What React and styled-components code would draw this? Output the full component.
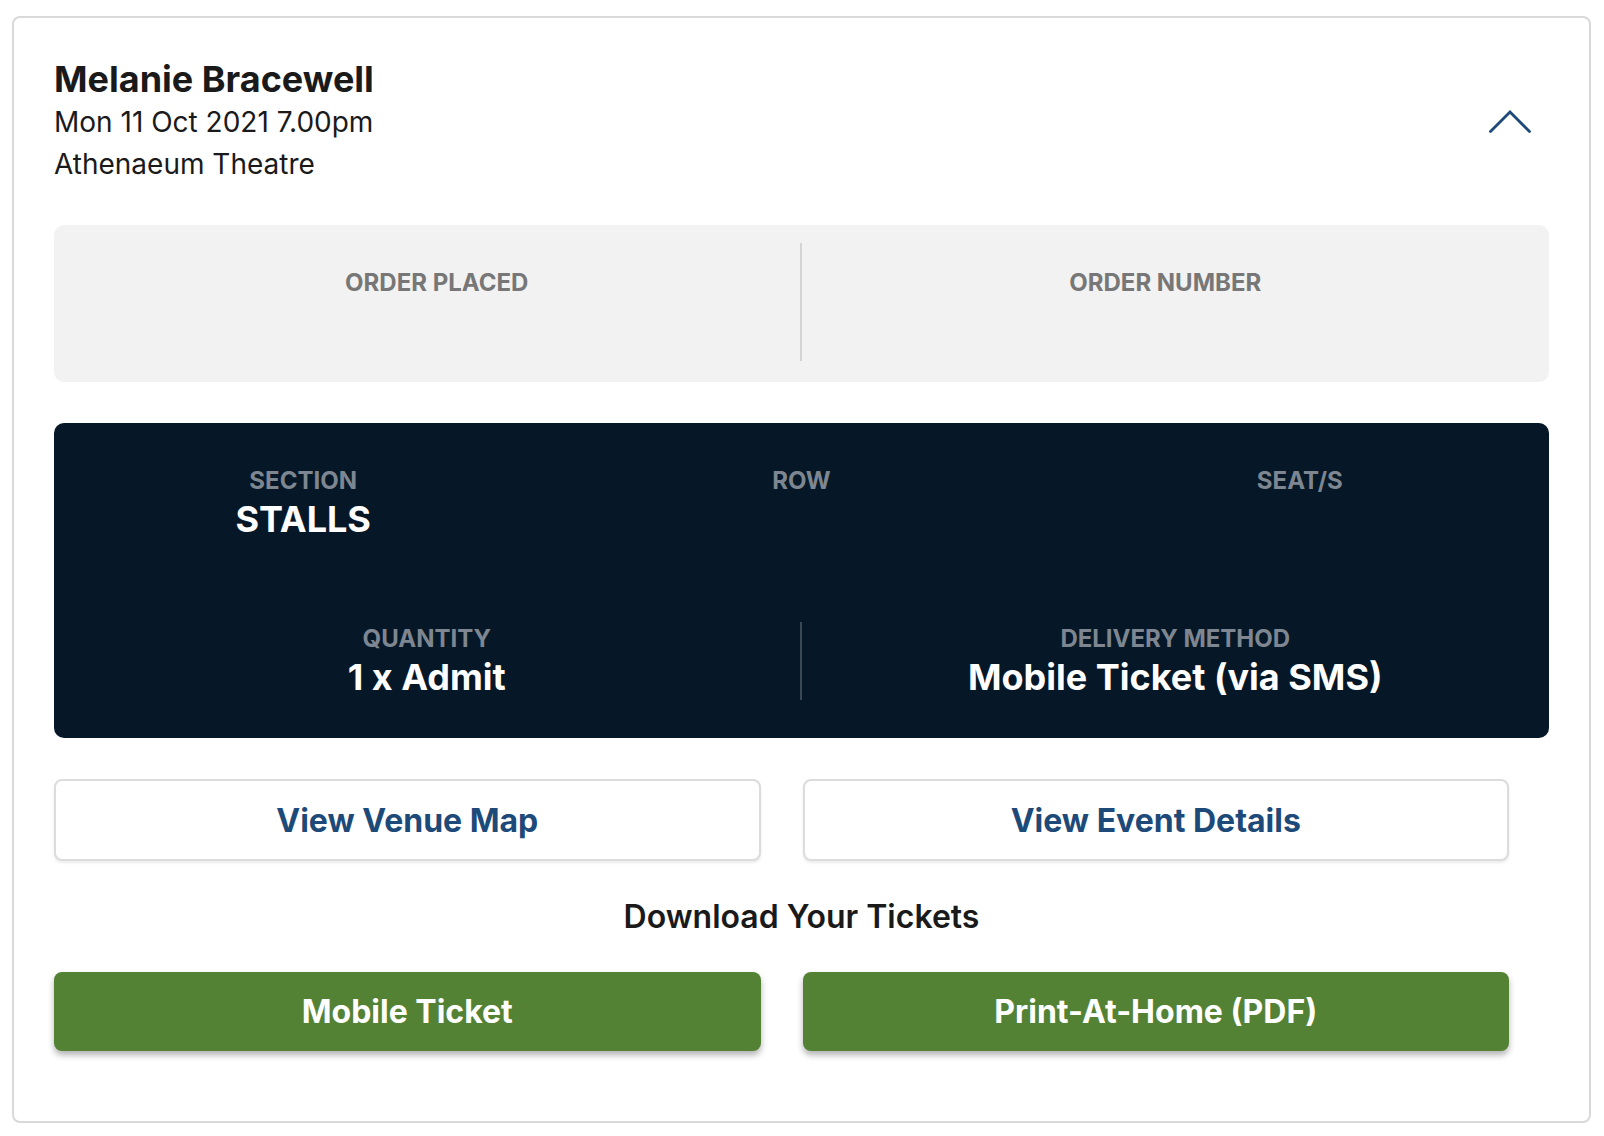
import React from "react";
import styled, { createGlobalStyle } from "styled-components";

const GlobalStyle = createGlobalStyle`
  html, body {
    margin: 0;
    padding: 0;
    background: #ffffff;
    font-family: Inter, "Noto Sans", "Liberation Sans", sans-serif;
    color: #1a1a1a;
  }
  * { box-sizing: border-box; }
`;

const Page = styled.div`
  padding: 16px 13px 13px 12px;
`;

const Card = styled.section`
  border: 2px solid #d9d9d9;
  border-radius: 8px;
  padding: 40px 40px 70px 40px;
  background: #fff;
`;

const Header = styled.header`
  display: flex;
  align-items: center;
  justify-content: space-between;
  margin-bottom: 40px;
`;

const HeaderText = styled.div`
  display: flex;
  flex-direction: column;
`;

const Title = styled.h2`
  margin: 0;
  font-size: 36px;
  line-height: 42px;
  font-weight: 700;
  color: #1a1a1a;
`;

const Meta = styled.p`
  margin: 0;
  font-size: 28px;
  line-height: 42px;
  font-weight: 400;
  color: #1a1a1a;
  &:first-of-type {
    margin-top: 1px;
  }
`;

const ToggleButton = styled.button`
  border: none;
  background: none;
  padding: 0;
  margin-right: 18px;
  display: flex;
  cursor: pointer;
`;

const OrderBox = styled.div`
  display: grid;
  grid-template-columns: 1fr 1fr;
  background: #f2f2f2;
  border-radius: 10px;
  padding: 18px 20px 21px;
  margin-bottom: 41px;
`;

const OrderCol = styled.div`
  display: flex;
  flex-direction: column;
  align-items: center;
  padding: 23px 0 20px;
  border-right: ${(p) => (p.$divider ? "2px solid #d4d4d4" : "none")};
`;

const Label = styled.div`
  font-size: 24px;
  line-height: 33px;
  font-weight: 700;
  text-transform: uppercase;
  color: ${(p) => (p.$dark ? "#7e8791" : "#777777")};
`;

const EmptyValue = styled.div`
  min-height: 42px;
`;

const SeatBox = styled.div`
  background: #061827;
  border-radius: 10px;
  padding: 41px 0 38px;
  margin-bottom: 41px;
  display: flex;
  flex-direction: column;
  gap: 80px;
`;

const SeatRow = styled.div`
  display: grid;
  grid-template-columns: repeat(${(p) => p.$cols}, 1fr);
`;

const SeatCol = styled.div`
  display: flex;
  flex-direction: column;
  align-items: center;
  border-right: ${(p) => (p.$divider ? "2px solid #3b4754" : "none")};
`;

const Value = styled.div`
  font-size: 36px;
  line-height: 45px;
  font-weight: 700;
  color: #ffffff;
  min-height: 45px;
`;

const LinkRow = styled.div`
  display: grid;
  grid-template-columns: 1fr 1fr;
  gap: 42px;
  margin-right: 40px;
`;

const OutlineButton = styled.button`
  height: 82px;
  border: 2px solid #dcdcdc;
  border-radius: 8px;
  background: #ffffff;
  box-shadow: 0 2px 3px rgba(0, 0, 0, 0.08);
  font-family: inherit;
  font-size: 32px;
  font-weight: 700;
  color: #1d4a78;
  cursor: pointer;
`;

const DownloadTitle = styled.h3`
  margin: 33px 0 33px;
  text-align: center;
  font-size: 32px;
  line-height: 45px;
  font-weight: 600;
  color: #1a1a1a;
`;

const GreenButton = styled.button`
  height: 79px;
  border: none;
  border-radius: 8px;
  background: #548235;
  box-shadow: 0 4px 6px rgba(0, 0, 0, 0.3);
  font-family: inherit;
  font-size: 32px;
  font-weight: 700;
  color: #ffffff;
  cursor: pointer;
`;

const ChevronUp = () => (
  <svg width="42" height="24" viewBox="0 0 42 24" fill="none">
    <polyline
      points="1.5,21.5 21,2 40.5,21.5"
      stroke="#1d4a78"
      strokeWidth="2.8"
      strokeLinecap="round"
      strokeLinejoin="miter"
    />
  </svg>
);

export default function App() {
  return (
    <>
      <GlobalStyle />
      <Page>
        <Card>
          <Header>
            <HeaderText>
              <Title>Melanie Bracewell</Title>
              <Meta>Mon 11 Oct 2021 7.00pm</Meta>
              <Meta>Athenaeum Theatre</Meta>
            </HeaderText>
            <ToggleButton aria-label="Collapse">
              <ChevronUp />
            </ToggleButton>
          </Header>

          <OrderBox>
            <OrderCol $divider>
              <Label>Order Placed</Label>
              <EmptyValue />
            </OrderCol>
            <OrderCol>
              <Label>Order Number</Label>
              <EmptyValue />
            </OrderCol>
          </OrderBox>

          <SeatBox>
            <SeatRow $cols={3}>
              <SeatCol>
                <Label $dark>Section</Label>
                <Value>STALLS</Value>
              </SeatCol>
              <SeatCol>
                <Label $dark>Row</Label>
                <Value />
              </SeatCol>
              <SeatCol>
                <Label $dark>Seat/s</Label>
                <Value />
              </SeatCol>
            </SeatRow>
            <SeatRow $cols={2}>
              <SeatCol $divider>
                <Label $dark>Quantity</Label>
                <Value>1 x Admit</Value>
              </SeatCol>
              <SeatCol>
                <Label $dark>Delivery Method</Label>
                <Value>Mobile Ticket (via SMS)</Value>
              </SeatCol>
            </SeatRow>
          </SeatBox>

          <LinkRow>
            <OutlineButton>View Venue Map</OutlineButton>
            <OutlineButton>View Event Details</OutlineButton>
          </LinkRow>

          <DownloadTitle>Download Your Tickets</DownloadTitle>

          <LinkRow>
            <GreenButton>Mobile Ticket</GreenButton>
            <GreenButton>Print-At-Home (PDF)</GreenButton>
          </LinkRow>
        </Card>
      </Page>
    </>
  );
}
